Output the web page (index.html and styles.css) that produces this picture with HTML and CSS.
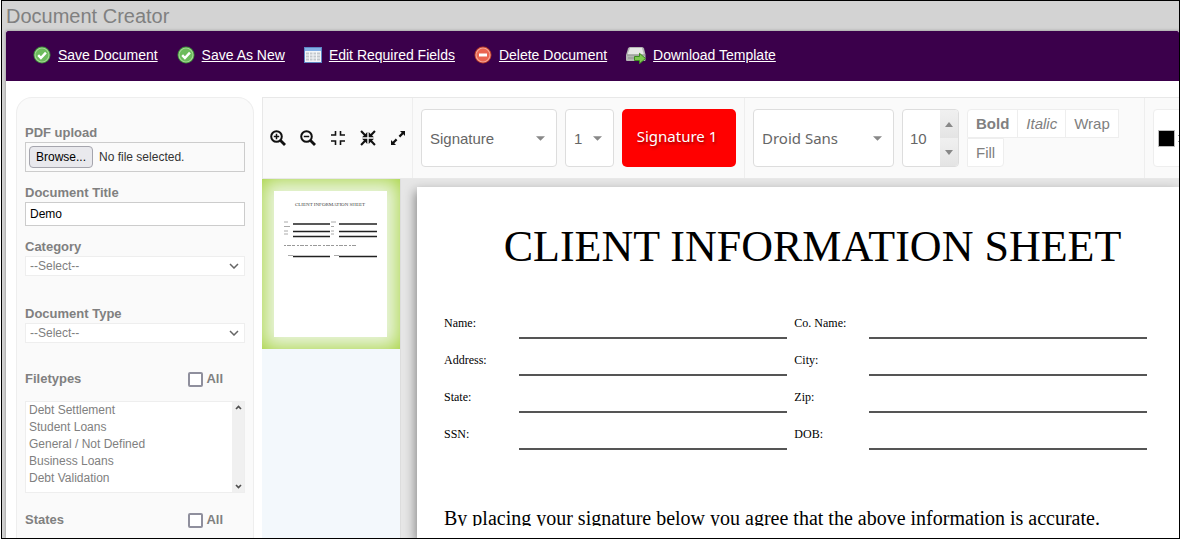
FILE: index.html
```
<!DOCTYPE html>
<html lang="en">
<head>
  <meta charset="UTF-8" />
  <meta name="viewport" content="width=device-width, initial-scale=1.0" />
  <title>Document Creator</title>
  <link rel="stylesheet" href="styles.css">
</head>
<body>

  <h1 class="page-title">Document Creator</h1>

  <div class="sheet">
    <nav class="actions">
      <a href="#save">
        <svg class="action-icon" viewBox="0 0 18 18" aria-hidden="true">
          <circle cx="9" cy="9" r="8.5" fill="#3f8f3a"/>
          <circle cx="9" cy="9" r="7" fill="#6cbb5c" stroke="#a4d894" stroke-width="1.2"/>
          <path d="M5.2 9.2l2.7 2.8 5-5.4" fill="none" stroke="#fff" stroke-width="2.4"/>
        </svg>
        <span>Save Document</span>
      </a>
      <a href="#save-as">
        <svg class="action-icon" viewBox="0 0 18 18" aria-hidden="true">
          <circle cx="9" cy="9" r="8.5" fill="#3f8f3a"/>
          <circle cx="9" cy="9" r="7" fill="#6cbb5c" stroke="#a4d894" stroke-width="1.2"/>
          <path d="M5.2 9.2l2.7 2.8 5-5.4" fill="none" stroke="#fff" stroke-width="2.4"/>
        </svg>
        <span>Save As New</span>
      </a>
      <a href="#fields">
        <svg class="action-icon" viewBox="0 0 18 18" aria-hidden="true">
          <path d="M0 1h18v16H0z" fill="#5d87c4"/>
          <path d="M1 2h16v3H1z" fill="#85b0e6"/>
          <path d="M1 5h16v11H1z" fill="#f4f6f8"/>
          <path d="M2 7.5h14M2 10.5h14M2 13.5h14" stroke="#c3c8cd" stroke-width="2"/>
          <path d="M5.5 5v11M9 5v11M12.5 5v11" stroke="#f4f6f8"/>
        </svg>
        <span>Edit Required Fields</span>
      </a>
      <a href="#delete">
        <svg class="action-icon" viewBox="0 0 18 18" aria-hidden="true">
          <circle cx="9" cy="9" r="8.5" fill="#b93a26"/>
          <circle cx="9" cy="9" r="7" fill="#ea6551" stroke="#f6a698" stroke-width="1.2"/>
          <path d="M5 7.5h8v3H5z" fill="#fff"/>
        </svg>
        <span>Delete Document</span>
      </a>
      <a href="#download">
        <svg class="action-icon wide" viewBox="0 0 20 18" aria-hidden="true">
          <path d="M4 1h12q1.500 0 2 1.500l1.500 6V14q0 1-1 1H1q-1 0-1-1V9l2-6.500Q2.500 1 4 1z" fill="#b4b6b4"/>
          <path d="M4 2h12l1.800 6.500H1.500z" fill="#e6e7e6"/>
          <path d="M1 9h18M2 12h6" stroke="#8d908d"/>
          <path d="M8.500 10.500h5V7.300l6 5.200-6 5.200v-3.200h-5z" fill="#7fc850" stroke="#3c8a22"/>
        </svg>
        <span>Download Template</span>
      </a>
    </nav>

    <main class="workspace">
      <form class="sidebar">
        <label class="field-label" for="pdf">PDF upload</label>
        <input class="file-input" type="file" id="pdf">
        <label class="file-box" for="pdf"><span class="browse">Browse...</span>No file selected.</label>

        <label class="field-label" for="title">Document Title</label>
        <input class="text-input" type="text" id="title" value="Demo">

        <label class="field-label" for="category">Category</label>
        <div class="picker side">
          <select id="category"><option>--Select--</option></select>
          <svg width="10" height="6" viewBox="0 0 10 6" aria-hidden="true"><path d="M1 1l4 4 4-4" fill="none" stroke="#666" stroke-width="1.5"/></svg>
        </div>

        <label class="field-label" for="doctype">Document Type</label>
        <div class="picker side">
          <select id="doctype"><option>--Select--</option></select>
          <svg width="10" height="6" viewBox="0 0 10 6" aria-hidden="true"><path d="M1 1l4 4 4-4" fill="none" stroke="#666" stroke-width="1.5"/></svg>
        </div>

        <div class="list-head">
          <label for="filetypes">Filetypes</label>
          <label class="all"><input type="checkbox">All</label>
        </div>
        <div class="listbox">
          <select id="filetypes" multiple size="5">
            <option>Debt Settlement</option>
            <option>Student Loans</option>
            <option>General / Not Defined</option>
            <option>Business Loans</option>
            <option>Debt Validation</option>
          </select>
          <div class="scrollbar" aria-hidden="true">
            <svg width="7" height="5" viewBox="0 0 7 5"><path d="M1 4l2.500-2.500L6 4" fill="none" stroke="#505050" stroke-width="1.7"/></svg>
            <svg width="7" height="5" viewBox="0 0 7 5"><path d="M1 1l2.500 2.500L6 1" fill="none" stroke="#505050" stroke-width="1.7"/></svg>
          </div>
        </div>

        <div class="list-head">
          <span>States</span>
          <label class="all"><input type="checkbox">All</label>
        </div>
      </form>

      <section class="editor">
        <div class="toolbar">
          <div class="group zoom-tools">
            <button type="button" aria-label="Zoom in">
              <svg viewBox="0 0 16 16"><g fill="none" stroke="#111" stroke-width="2"><circle cx="6.500" cy="6.500" r="5.300"/><path d="M10.500 10.500l4.500 4.500" stroke-width="2.800"/><path d="M3.800 6.500h5.400M6.500 3.800v5.400" stroke-width="1.500"/></g></svg>
            </button>
            <button type="button" aria-label="Zoom out">
              <svg viewBox="0 0 16 16"><g fill="none" stroke="#111" stroke-width="2"><circle cx="6.500" cy="6.500" r="5.300"/><path d="M10.500 10.500l4.500 4.500" stroke-width="2.800"/><path d="M3.800 6.500h5.400" stroke-width="1.500"/></g></svg>
            </button>
            <button type="button" aria-label="Fit page">
              <svg viewBox="0 0 16 16"><path d="M1 5h4.500V1M10.500 1v4H15M1 11h4.500v4M10.500 15v-4H15" fill="none" stroke="#111" stroke-width="1.600"/></svg>
            </button>
            <button type="button" aria-label="Actual size">
              <svg viewBox="0 0 16 16"><path d="M7.300 2v5.300H2l1.900-1.900L.3 1.800 1.800.3l3.600 3.600zM8.700 2v5.300H14l-1.900-1.900 3.600-3.600L14.200.3l-3.600 3.600zM7.300 14V8.700H2l1.900 1.900-3.600 3.600 1.500 1.500 3.600-3.600zM8.700 14V8.700H14l-1.900 1.900 3.600 3.600-1.500 1.500-3.600-3.600z" fill="#111"/></svg>
            </button>
            <button type="button" aria-label="Expand">
              <svg viewBox="0 0 16 16"><path d="M10 1h5v5l-1.700-1.700-3.100 3.100-1.600-1.600 3.100-3.100zM6 15H1v-5l1.700 1.700 3.100-3.100 1.600 1.600-3.100 3.100z" fill="#111"/></svg>
            </button>
          </div>

          <div class="group">
            <div class="picker tool kind">
              <select aria-label="Field type"><option>Signature</option></select>
              <svg width="9" height="5" viewBox="0 0 10 5" aria-hidden="true"><path d="M0 0h10L5 5z" fill="#888"/></svg>
            </div>
            <div class="picker tool count">
              <select aria-label="Field number"><option>1</option></select>
              <svg width="9" height="5" viewBox="0 0 10 5" aria-hidden="true"><path d="M0 0h10L5 5z" fill="#888"/></svg>
            </div>
            <button type="button" class="place-btn">Signature 1</button>
          </div>

          <div class="group">
            <div class="picker tool font">
              <select aria-label="Font"><option>Droid Sans</option></select>
              <svg width="9" height="5" viewBox="0 0 10 5" aria-hidden="true"><path d="M0 0h10L5 5z" fill="#888"/></svg>
            </div>
            <div class="spinner">
              <input type="text" value="10" aria-label="Font size">
              <div class="steps">
                <button type="button" aria-label="Increase"><svg width="8" height="5" viewBox="0 0 8 5"><path d="M0 5h8L4 0z" fill="#888"/></svg></button>
                <button type="button" aria-label="Decrease"><svg width="8" height="5" viewBox="0 0 8 5"><path d="M0 0h8L4 5z" fill="#888"/></svg></button>
              </div>
            </div>
            <div class="format">
              <button type="button"><b>Bold</b></button>
              <button type="button"><i>Italic</i></button>
              <button type="button">Wrap</button>
              <button type="button">Fill</button>
            </div>
          </div>

          <div class="group color-tools">
            <button type="button" class="color-btn" aria-label="Text color"><span class="swatch"></span><span class="grip"></span></button>
          </div>
        </div>

        <div class="stage">
          <div class="thumbs">
            <a class="thumb" href="#page1" aria-label="Page 1">
              <svg viewBox="0 0 113 146" aria-hidden="true">
                <path d="M0 0h113v146H0z" fill="#fff"/>
                <text x="56" y="15" text-anchor="middle" font-family="Liberation Serif, serif" font-size="5" fill="#444">CLIENT INFORMATION SHEET</text>
                <path d="M19 33h37M65 33h38M19 40.500h37M65 40.500h38M19 45.500h37M65 45.500h38M19 65.500h37M65 65.500h38" stroke="#222" stroke-width="1.500"/>
                <path d="M10 31h4M57 31h5M10 35.500h6M57 35.500h3M10 40h4M57 40h3M10 43h4M57 43h3M14 64.500h5M60 64.500h5" stroke="#aaa"/>
                <path d="M10 54.500h72" stroke="#999" stroke-dasharray="2 1 4 1 3 2"/>
              </svg>
            </a>
          </div>

          <article class="document">
            <h2>CLIENT INFORMATION SHEET</h2>
            <div class="blanks">
              <span>Name:</span><i></i><span>Co. Name:</span><i></i>
              <span>Address:</span><i></i><span>City:</span><i></i>
              <span>State:</span><i></i><span>Zip:</span><i></i>
              <span>SSN:</span><i></i><span>DOB:</span><i></i>
            </div>
            <p>By placing your signature below you agree that the above information is accurate.</p>
          </article>
        </div>
      </section>
    </main>
  </div>

</body>
</html>
```
FILE: styles.css
```
* {
  box-sizing: border-box;
}

html {
  background: #fff;
}

body {
  margin: 0 0 0 1px;
  height: 100vh;
  display: flex;
  flex-direction: column;
  overflow: hidden;
  border: 1px solid #000;
  background: #d3d3d3;
  font-family: "Liberation Sans", Arial, sans-serif;
  font-size: 13px;
  color: #808080;
}

button, input, select {
  font: inherit;
  color: inherit;
  margin: 0;
}

button {
  padding: 0;
  cursor: pointer;
}

.page-title {
  margin: 0;
  padding-left: 4px;
  font-size: 20px;
  font-weight: normal;
  line-height: 30px;
}

.sheet {
  flex: 1;
  min-height: 0;
  display: flex;
  flex-direction: column;
  margin-left: 4px;
  background: #fff;
  box-shadow: 0 0 3px #888;
}

/* top action links */
.actions {
  display: flex;
  align-items: center;
  gap: 19px;
  height: 50px;
  padding: 0 0 2px 27px;
  background: #3b004b;
  border-radius: 2px 2px 0 0;
  flex-shrink: 0;
}

.actions a {
  display: flex;
  align-items: center;
  gap: 7px;
  color: #fff;
  font-size: 14px;
  white-space: nowrap;
}

.action-icon {
  width: 18px;
  height: 18px;
}

.action-icon.wide {
  width: 20px;
}

.workspace {
  flex: 1;
  min-height: 0;
  display: flex;
  align-items: stretch;
  gap: 8px;
  padding: 16px 0 0 10px;
}

/* left panel */
.sidebar {
  display: flex;
  flex-direction: column;
  flex: 0 0 238px;
  padding: 24px 8px 0;
  background: #fafafa;
  border: 1px solid #eee;
  border-bottom: 0;
  border-radius: 16px 16px 0 0;
  overflow: hidden;
}

.field-label,
.list-head {
  font-weight: bold;
  line-height: 18px;
}

.field-label {
  padding-top: 2px;
}

.file-input {
  position: absolute;
  width: 1px;
  height: 1px;
  opacity: 0;
}

.file-box {
  display: flex;
  align-items: center;
  gap: 6px;
  height: 30px;
  flex-shrink: 0;
  margin-bottom: 10px;
  padding-left: 3px;
  border: 1px solid #ccc;
  color: #333;
  font-size: 12px;
}

.browse {
  padding: 0 6px;
  line-height: 20px;
  background: #e9e9ed;
  border: 1px solid #a5a5ad;
  border-radius: 4px;
  color: #000;
}

.text-input {
  height: 24px;
  flex-shrink: 0;
  margin-bottom: 10px;
  padding: 0 4px;
  border: 1px solid #ccc;
  background: #fff;
  color: #000;
  font-size: 12px;
}

/* select with its arrow laid in the same grid cell */
.picker {
  display: grid;
  align-items: center;
}

.picker select,
.picker svg {
  grid-area: 1 / 1;
}

.picker select {
  width: 100%;
  height: 100%;
  appearance: none;
  background: #fff;
  border: 1px solid #e6e6e6;
}

.picker svg {
  justify-self: end;
  pointer-events: none;
}

.picker.side {
  height: 20px;
  flex-shrink: 0;
  margin-bottom: 27px;
}

.picker.side select {
  padding: 0 4px;
  border-color: #eee;
  font-size: 12px;
}

.picker.side svg {
  margin-right: 6px;
}

.list-head {
  display: flex;
  justify-content: space-between;
  padding-right: 22px;
}

.all {
  display: flex;
  align-items: center;
  gap: 3px;
}

.all input {
  appearance: none;
  width: 15px;
  height: 15px;
  background: #fff;
  border: 2px solid #8f8f9d;
  border-radius: 2px;
}

.listbox {
  display: flex;
  height: 92px;
  flex-shrink: 0;
  margin: 13px 0 18px;
  background: #fff;
  border: 1px solid #eee;
}

.listbox select {
  flex: 1;
  height: 100%;
  padding: 0;
  border: 0;
  background: none;
  overflow: hidden;
  font-size: 12px;
}

.listbox option {
  padding: 1px 3px 2px;
  line-height: 14px;
}

.scrollbar {
  display: flex;
  flex-direction: column;
  justify-content: space-between;
  align-items: center;
  width: 12px;
  padding: 3px 0;
  background: #f0f0f0;
}

/* editor */
.editor {
  flex: 1;
  min-width: 0;
  display: flex;
  flex-direction: column;
}

.toolbar {
  display: flex;
  height: 82px;
  flex-shrink: 0;
  overflow: hidden;
  background: #fafafa;
  border: 1px solid #e8e8e8;
  border-width: 1px 0 1px 1px;
}

.group {
  display: flex;
  align-items: center;
  flex-shrink: 0;
  gap: 8px;
  padding: 0 8px;
  border-right: 1px solid #eee;
}

.zoom-tools {
  gap: 14px;
  padding: 0 6px 0 7px;
}

.zoom-tools button {
  width: 16px;
  height: 16px;
  border: 0;
  background: none;
}

.zoom-tools svg {
  display: block;
}

.picker.tool {
  height: 58px;
  font-size: 15px;
  color: #666;
}

.picker.tool select {
  padding: 0 8px;
  border-color: #ddd;
  border-radius: 4px;
}

.picker.tool svg {
  margin-right: 12px;
}

.kind {
  width: 136px;
}

.count {
  width: 49px;
}

.font {
  width: 141px;
}

.picker.font select,
.place-btn {
  font-family: "Noto Sans", sans-serif;
}

.place-btn {
  width: 114px;
  height: 58px;
  padding: 0 4px 4px 0;
  border: 0;
  border-radius: 5px;
  background: #f00;
  color: #fff;
  font-size: 15px;
  text-shadow: 1px 2px 3px rgba(0, 0, 0, 0.4);
}

.spinner {
  display: flex;
  width: 57px;
  height: 58px;
  background: #fff;
  border: 1px solid #ddd;
  border-radius: 4px;
  overflow: hidden;
}

.spinner input {
  flex: 1;
  min-width: 0;
  padding: 0 0 0 7px;
  border: 0;
  background: none;
  color: #666;
  font-size: 15px;
}

.steps {
  display: flex;
  flex-direction: column;
  width: 18px;
}

.steps button {
  flex: 1;
  border: 0;
  background: linear-gradient(#f0f0f0, #e4e4e4);
}

.steps svg {
  display: block;
  margin: 0 auto;
}

.format {
  display: flex;
  flex-wrap: wrap;
  width: 169px;
}

.format button {
  height: 29px;
  padding: 0 8px;
  margin-right: -1px;
  background: #fff;
  border: 1px solid #eee;
  font-size: 15px;
}

.format button:first-child {
  border-radius: 4px 0 0 0;
}

.format button:last-child {
  border-radius: 0 0 4px 0;
}

.color-btn {
  display: flex;
  align-items: center;
  gap: 3px;
  width: 44px;
  height: 58px;
  padding-left: 4px;
  border: 1px solid #eee;
  border-radius: 4px;
  background: #fff;
}

.swatch {
  width: 17px;
  height: 17px;
  background: #000;
  border: 1px solid #bbb;
}

.grip {
  width: 8px;
  height: 7px;
  border: 1px dotted #999;
  border-width: 1px 0;
}

.stage {
  flex: 1;
  min-height: 0;
  display: flex;
  background: #e6e6e6;
  overflow: hidden;
}

.thumbs {
  flex: 0 0 139px;
  background: #f3f8fc;
  border-right: 1px solid #ddd;
}

.thumb {
  display: block;
  padding: 12px 13px 12px 12px;
  background: #e9f4dc;
  box-shadow: inset 0 0 20px #a0d030;
}

.thumb svg {
  display: block;
  width: 100%;
}

.document {
  flex: 1;
  min-width: 0;
  margin: 8px 0 0 16px;
  padding: 37px 32px 0 27px;
  background: #fff;
  box-shadow: -2px 4px 10px rgba(0, 0, 0, 0.4);
  font-family: "Liberation Serif", "Times New Roman", serif;
  color: #000;
}

.document h2 {
  margin: 0 0 46px;
  padding-left: 34px;
  font-size: 44px;
  font-weight: normal;
  line-height: 46px;
  text-align: center;
  white-space: nowrap;
}

.blanks {
  display: grid;
  grid-template-columns: 75px 29fr 82px 30fr;
  grid-auto-rows: 37px;
  font-size: 12px;
  line-height: 14px;
}

.blanks span:nth-child(4n + 3) {
  padding-left: 7px;
}

.blanks i {
  height: 23px;
  border-bottom: 2px solid #555;
}

.document p {
  margin: 46px 0 0;
  font-size: 20px;
  line-height: 16px;
  overflow: hidden;
  white-space: nowrap;
}
```
